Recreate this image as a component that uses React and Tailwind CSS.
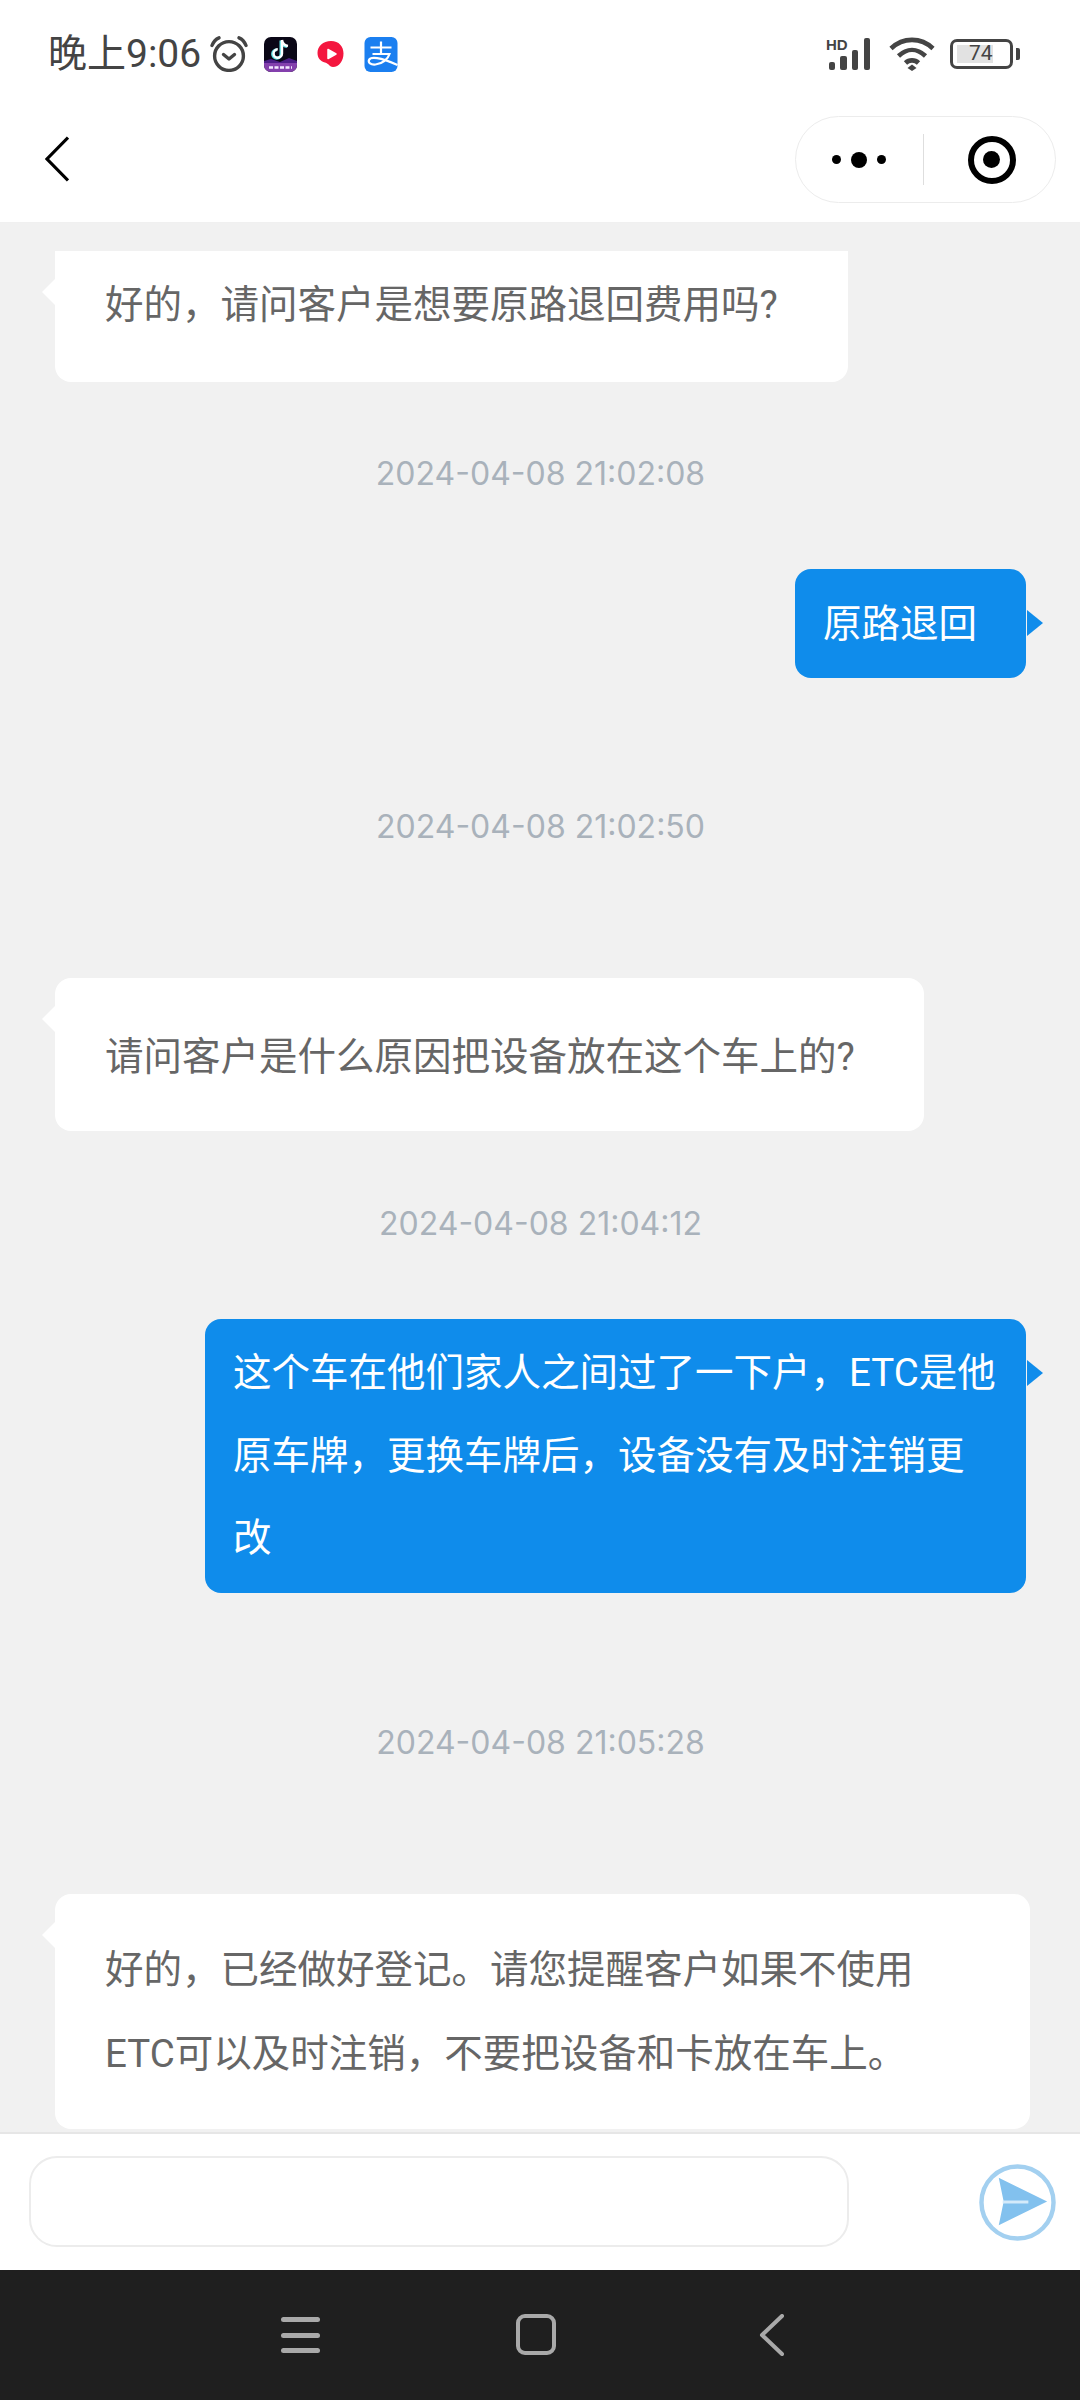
const cjk = "font-['Roboto','Noto_Sans_CJK_SC',sans-serif]";

function Alarm() {
  return (
    <svg width="40" height="36" viewBox="0 0 38 36" fill="none" stroke="#444" strokeWidth="3.4" strokeLinecap="round" strokeLinejoin="round">
      <circle cx="19" cy="20" r="14.4" />
      <path d="M13.5 18.5l5.5 4.5 5.5-4.5" />
      <path d="M2 9.5C3.5 5.5 6 3 9 1.8" />
      <path d="M36 9.5C34.5 5.5 32 3 29 1.8" />
    </svg>
  );
}

function TikTokIcon() {
  return (
    <svg width="33" height="35" viewBox="0 0 33 35">
      <rect width="33" height="35" rx="7" fill="#0a0716" />
      <path d="M0 24L7 22 16 25 25 21 33 24V28H0z" fill="#4b1d86" />
      <path d="M0 26H33V28a7 7 0 0 1-7 7H7a7 7 0 0 1-7-7z" fill="#8440ad" />
      <path d="M18 3v13.500a4.200 4.200 0 1 1-4.200-4.200M18 3c.6 3.500 2.700 5.500 6 6" fill="none" stroke="#5fe3e6" strokeWidth="3" transform="translate(-1 .5)" />
      <path d="M18 3v13.500a4.200 4.200 0 1 1-4.200-4.200M18 3c.6 3.500 2.700 5.500 6 6" fill="none" stroke="#fff" strokeWidth="2.400" />
      <path d="M5 30.500H28" stroke="#f3e8ff" strokeWidth="2.600" strokeDasharray="4 1.500" />
    </svg>
  );
}

function RedPlayIcon() {
  return (
    <svg width="27" height="28" viewBox="0 0 27 28">
      <path d="M14 1C22 1 26.500 6.500 26.500 13.500 26.500 21 22 27 16 27 12.500 27 12 23.500 8 22.500 3.500 21.500.5 18 .5 13 .5 6 6 1 14 1z" fill="#f4173f" />
      <path d="M11 9.500L19 14l-8 4.500z" fill="#fff" strokeLinejoin="round" stroke="#fff" strokeWidth="1.500" />
    </svg>
  );
}

function AlipayIcon() {
  return (
    <svg width="34" height="35" viewBox="0 0 33 35">
      <rect width="33" height="35" rx="6" fill="#1b7ff0" />
      <path d="M6 10.500H27M16.500 4.500V17M8 17H25C23.500 22 18 27 11 27.500 6 28 3.500 25.500 4.500 23 6 19.500 15 20 33 28" fill="none" stroke="#fff" strokeWidth="2.200" />
    </svg>
  );
}

function Signal() {
  return (
    <div className="relative w-[50px] h-[34px]">
      <span className="absolute left-0 top-0 text-[15px] leading-[15px] font-bold text-[#444] font-['Liberation_Sans',sans-serif]">HD</span>
      <svg className="absolute left-0 top-0" width="50" height="34" viewBox="0 0 50 34" fill="#444">
        <rect x="3" y="25" width="6" height="8" rx="2" />
        <rect x="14" y="19" width="7" height="14" rx="2" />
        <rect x="26" y="13" width="6" height="20" rx="2" />
        <rect x="38" y="1" width="6" height="32" rx="2" />
      </svg>
    </div>
  );
}

function Wifi() {
  return (
    <svg width="46" height="34" viewBox="0 0 46 34" fill="none" stroke="#444" strokeWidth="4.600">
      <path d="M2 11.500C14 0 32 0 44 11.500" />
      <path d="M9.500 19C18 11 28 11 36.500 19" />
      <path d="M16.500 26C20 22.500 26 22.500 29.500 26" />
      <path d="M23 27.500l4.500 3.500L23 34l-4.500-3z" fill="#444" stroke="none" />
    </svg>
  );
}

function Battery() {
  return (
    <div className="flex items-center gap-[3px]">
      <div className="relative w-[63px] h-[30px] rounded-[7px] border-[3px] border-[#444] p-[3px] pl-[4px]">
        <div className="h-full w-[36px] bg-[#e2e2e2]" />
        <span className="absolute left-[16px] top-0 h-full flex items-center text-[21px] text-[#444] font-['Roboto',sans-serif]">74</span>
      </div>
      <div className="w-[4px] h-[12px] rounded-r-[2px] bg-[#444]" />
    </div>
  );
}

function StatusBar() {
  return (
    <div className="h-[100px] flex items-start justify-between pl-[48px] pr-[60px] pt-[36px]">
      <div className="flex items-center h-[36px]">
        <span className={`text-[39px] leading-[36px] text-[#444] ${cjk}`}>晚上9:06</span>
        <div className="ml-[8px]"><Alarm /></div>
        <div className="ml-[15px]"><TikTokIcon /></div>
        <div className="ml-[20px]"><RedPlayIcon /></div>
        <div className="ml-[20px]"><AlipayIcon /></div>
      </div>
      <div className="flex items-center gap-[13px] h-[36px]">
        <Signal />
        <Wifi />
        <div className="ml-[2px]"><Battery /></div>
      </div>
    </div>
  );
}

function Header() {
  return (
    <div className="h-[123px] flex items-start justify-between pl-[45px] pr-[24px] border-b border-[#f0f0f0]">
      <svg className="mt-[36px]" width="24" height="46" viewBox="0 0 24 46" fill="none" stroke="#000" strokeWidth="3.200">
        <path d="M23 1.500L2 23l21 21.500" />
      </svg>
      <div className="mt-[16px] w-[261px] h-[87px] rounded-full border border-[#ececec] flex items-center">
        <div className="flex-1 flex items-center justify-center gap-[10px]">
          <span className="w-[9px] h-[9px] rounded-full bg-black" />
          <span className="w-[16px] h-[16px] rounded-full bg-black" />
          <span className="w-[9px] h-[9px] rounded-full bg-black" />
        </div>
        <div className="w-px h-[51px] bg-[#dedede]" />
        <div className="flex-1 flex items-center justify-center pl-[5px]">
          <div className="w-[48px] h-[48px] rounded-full border-[6px] border-black flex items-center justify-center">
            <span className="w-[17px] h-[17px] rounded-full bg-black" />
          </div>
        </div>
      </div>
    </div>
  );
}

function Stamp({ children, className }) {
  return (
    <div className={`text-center text-[32px] leading-[40px] text-[#a9b2bb] font-['Inter',sans-serif] ${className}`}>
      {children}
    </div>
  );
}

function LeftBubble({ children, className }) {
  return (
    <div className={`relative bg-white text-[38.5px] text-[#666] pl-[50px] ${cjk} ${className}`}>
      <span className="absolute left-[-13px] top-[28px] w-0 h-0 border-y-[13px] border-y-transparent border-r-[13px] border-r-white" />
      {children}
    </div>
  );
}

function RightBubble({ children, className }) {
  return (
    <div className={`relative self-end bg-[#0f8ceb] rounded-[16px] text-[38.5px] leading-[82.5px] text-white pl-[28px] ${cjk} ${className}`}>
      <span className="absolute right-[-17px] top-[41px] w-0 h-0 border-y-[13px] border-y-transparent border-l-[16px] border-l-[#0f8ceb]" />
      {children}
    </div>
  );
}

function Chat() {
  return (
    <div className="h-[1909px] bg-[#f1f1f1] overflow-hidden flex flex-col pl-[55px] pr-[54px] pt-[28px]">
      <LeftBubble className="w-[793px] h-[131px] rounded-b-[16px] pt-[10px] leading-[87px]">好的，请问客户是想要原路退回费用吗?</LeftBubble>
      <Stamp className="mt-[72px]">2024-04-08 21:02:08</Stamp>
      <RightBubble className="mt-[75px] w-[231px] h-[109px] pt-[14px]">原路退回</RightBubble>
      <Stamp className="mt-[129px]">2024-04-08 21:02:50</Stamp>
      <LeftBubble className="mt-[131px] w-[869px] h-[153px] rounded-[16px] pt-[35px] leading-[87px]">请问客户是什么原因把设备放在这个车上的?</LeftBubble>
      <Stamp className="mt-[73px]">2024-04-08 21:04:12</Stamp>
      <RightBubble className="mt-[75px] w-[821px] h-[274px] pt-[13px] pr-[28px]">这个车在他们家人之间过了一下户，ETC是他原车牌，更换车牌后，设备没有及时注销更改</RightBubble>
      <Stamp className="mt-[130px]">2024-04-08 21:05:28</Stamp>
      <LeftBubble className="mt-[131px] w-[975px] h-[235px] rounded-[16px] pt-[34px] pr-[100px] leading-[84px]">好的，已经做好登记。请您提醒客户如果不使用ETC可以及时注销，不要把设备和卡放在车上。</LeftBubble>
    </div>
  );
}

function InputBar() {
  return (
    <div className="h-[138px] bg-white border-t-[2px] border-[#e6e6e6] flex items-start justify-between pl-[29px] pr-[24px]">
      <div className="mt-[22px] w-[820px] h-[91px] rounded-[28px] border-[2px] border-[#ececec]" />
      <svg className="mt-[30px]" width="77" height="77" viewBox="0 0 78 78">
        <circle cx="39" cy="39" r="36.500" fill="#fff" stroke="#a3d0f0" strokeWidth="4.500" />
        <path d="M20 14L69 38 20 62l5-24z" fill="#82c1ee" />
        <path d="M24 38.500H50" stroke="#d4eafa" strokeWidth="3" />
      </svg>
    </div>
  );
}

function NavBar() {
  return (
    <div className="h-[130px] bg-[#1f1f1f] relative">
      <div className="absolute left-[281px] top-[47px] w-[39px] h-[36px] flex flex-col justify-between">
        <span className="h-[5px] rounded-full bg-[#a9a9a9]" />
        <span className="h-[5px] rounded-full bg-[#a9a9a9]" />
        <span className="h-[5px] rounded-full bg-[#a9a9a9]" />
      </div>
      <div className="absolute left-[516px] top-[44px] w-[40px] h-[41px] rounded-[9px] border-[4px] border-[#a9a9a9]" />
      <svg className="absolute left-[758px] top-[44px]" width="28" height="42" viewBox="0 0 28 42" fill="none" stroke="#a9a9a9" strokeWidth="4" strokeLinecap="round" strokeLinejoin="round">
        <path d="M24 2L4 21l20 19" />
      </svg>
    </div>
  );
}

export default function App() {
  return (
    <div className="w-[1080px] h-[2400px] bg-white flex flex-col overflow-hidden">
      <StatusBar />
      <Header />
      <Chat />
      <InputBar />
      <NavBar />
    </div>
  );
}
